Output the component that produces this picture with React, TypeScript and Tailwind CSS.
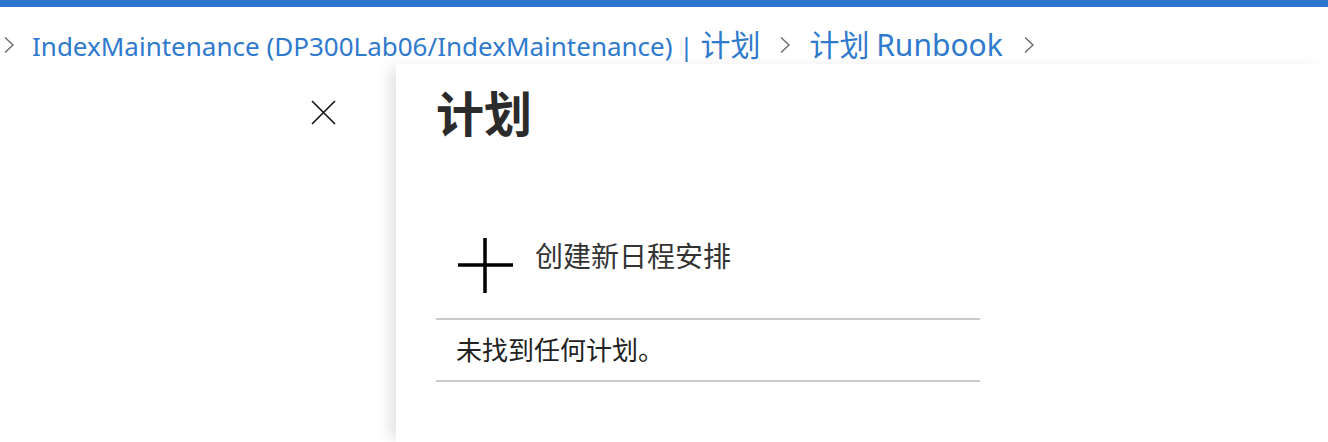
import React from "react";

const font = { fontFamily: '"Noto Sans", "Noto Sans CJK SC", sans-serif' };

function Chevron({ className }: { className?: string }) {
  return (
    <svg width="12" height="18" viewBox="0 0 12 18" className={className}>
      <path d="M2 1.5 L10 9 L2 16.5" fill="none" stroke="#6b6b6b" strokeWidth="1.4" />
    </svg>
  );
}

export default function App() {
  return (
    <div className="w-[1328px] h-[442px] bg-white overflow-hidden flex flex-col" style={font}>
      <div className="h-[7px] bg-[#2e77cc] shrink-0" />
      <div className="h-[57px] flex items-center pl-[3px] pt-[18px] shrink-0 text-[#2f7acd] text-[26px]">
        <Chevron />
        <span className="ml-[17px] whitespace-nowrap">
          IndexMaintenance (DP300Lab06/IndexMaintenance) | <span className="text-[30px]">计划</span>
        </span>
        <Chevron className="ml-[19px]" />
        <span className="ml-[18px] whitespace-nowrap">
          <span className="text-[30px]">计划</span> <span className="text-[30px]">Runbook</span>
        </span>
        <Chevron className="ml-[20px]" />
      </div>
      <div className="flex flex-1 min-h-0">
        <div className="w-[396px] shrink-0 flex justify-end pr-[60px] pt-[36px]">
          <svg width="25" height="25" viewBox="0 0 25 25">
            <path d="M1 1 L24 24 M24 1 L1 24" stroke="#111" strokeWidth="1.6" />
          </svg>
        </div>
        <div className="flex-1 bg-white shadow-[-10px_0_14px_-4px_rgba(0,0,0,0.12)] pl-[40px] pt-[18px]">
          <h1 className="text-[48px] font-bold text-[#2b2b2b] leading-[64px]">计划</h1>
          <div className="w-[544px] mt-[90px] flex items-start h-[82px]">
            <svg width="58" height="58" viewBox="0 0 58 58" className="ml-[20px] shrink-0">
              <path d="M29 2 V57 M2 29 H57" stroke="#000" strokeWidth="3.5" />
            </svg>
            <span className="ml-[21px] text-[28px] leading-[40px] text-[#333] whitespace-nowrap">创建新日程安排</span>
          </div>
          <div className="w-[544px]">
            <div className="border-b-2 border-[#cacaca]" />
            <div className="h-[60px] flex items-center pl-[20px] text-[26px] text-[#222]">未找到任何计划。</div>
            <div className="border-b-2 border-[#cacaca]" />
          </div>
        </div>
      </div>
    </div>
  );
}
